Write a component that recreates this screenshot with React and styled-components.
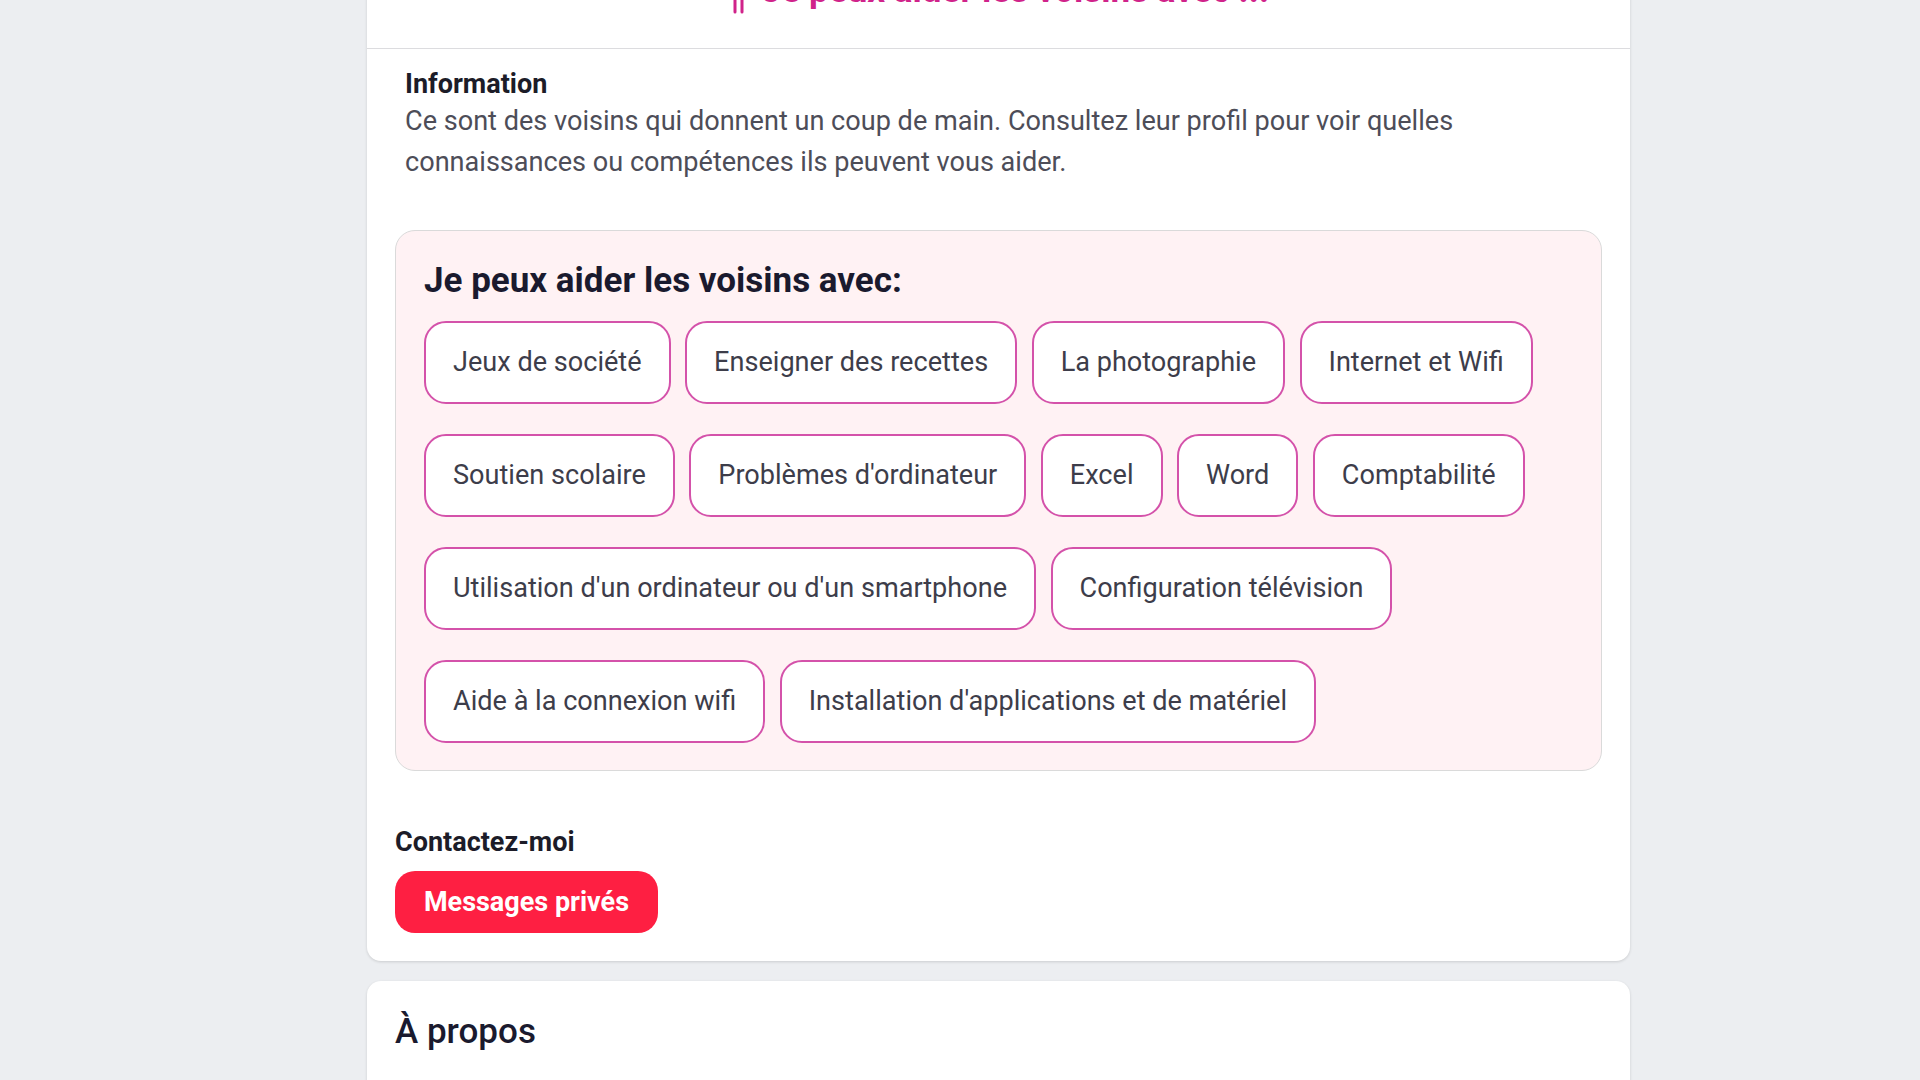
import React from 'react';
import styled, { createGlobalStyle } from 'styled-components';

const GlobalStyle = createGlobalStyle`
  html, body {
    margin: 0;
    padding: 0;
    overflow: hidden;
    background: #eceef1;
    font-family: Roboto, "Noto Sans", "Liberation Sans", sans-serif;
  }
`;

const Page = styled.main`
  width: 1263px;
  margin: -60px 0 0 367px;
  display: flex;
  flex-direction: column;
  gap: 20px;
`;

const Card = styled.section`
  background: #ffffff;
  border-radius: 14px;
  box-shadow: 0 1px 3px rgba(0, 0, 0, 0.14);
  padding: 0 28px ${({ $bottom }) => $bottom || '28px'};
`;

const CardHeader = styled.header`
  margin: 0 -28px;
  padding: 30px 28px 36px;
  border-bottom: 1px solid #dcdcdf;
  display: flex;
  justify-content: center;
  align-items: flex-end;
  gap: 12px;
`;

const TitleIcon = styled.svg`
  flex: none;
  margin-bottom: -4px;
`;

const PinkTitle = styled.h2`
  margin: 0;
  font-size: 35px;
  line-height: 42px;
  font-weight: 700;
  color: #d0238a;
`;

const InfoBlock = styled.div`
  padding: 18px 10px 0;
`;

const InfoTitle = styled.h3`
  margin: 0;
  font-size: 27px;
  line-height: 34px;
  font-weight: 700;
  color: #1c1c28;
`;

const InfoText = styled.p`
  margin: 0;
  font-size: 27.1px;
  line-height: 40.5px;
  color: #4d4d58;
`;

const SkillBox = styled.div`
  margin-top: 48px;
  background: #fff2f4;
  border: 1.5px solid #dadada;
  border-radius: 20px;
  padding: 28px 28px 27px;
`;

const SkillHeading = styled.h3`
  margin: 0 0 19px;
  font-size: 35px;
  line-height: 43px;
  font-weight: 700;
  color: #1a1a2e;
`;

const TagList = styled.div`
  display: flex;
  flex-wrap: wrap;
  gap: 30px 14.5px;
`;

const Tag = styled.span`
  display: inline-flex;
  align-items: center;
  padding: 23px 27px;
  font-size: 27.1px;
  line-height: 33px;
  color: #3d3d4a;
  background: #ffffff;
  border: 2px solid #d452aa;
  border-radius: 22px;
  white-space: nowrap;
`;

const ContactTitle = styled.h3`
  margin: 54px 0 12px;
  font-size: 27px;
  line-height: 34px;
  font-weight: 700;
  color: #1c1c28;
`;

const RedButton = styled.button`
  width: 263px;
  height: 62px;
  border: none;
  border-radius: 20px;
  background: #fe1f42;
  color: #ffffff;
  font-family: inherit;
  font-size: 27px;
  font-weight: 700;
  cursor: pointer;
`;

const AboutTitle = styled.h2`
  margin: 0;
  padding-top: 30px;
  font-size: 35px;
  line-height: 42px;
  font-weight: 500;
  color: #1a1a2e;
`;

const skills = [
  'Jeux de société',
  'Enseigner des recettes',
  'La photographie',
  'Internet et Wifi',
  'Soutien scolaire',
  "Problèmes d'ordinateur",
  'Excel',
  'Word',
  'Comptabilité',
  "Utilisation d'un ordinateur ou d'un smartphone",
  'Configuration télévision',
  'Aide à la connexion wifi',
  "Installation d'applications et de matériel",
];

function HandIcon() {
  return (
    <TitleIcon width="22" height="30" viewBox="0 0 22 30" fill="none" stroke="#d0238a" strokeWidth="3" strokeLinecap="round">
      <path d="M7 4v22M14 4v22" />
    </TitleIcon>
  );
}

export default function App() {
  return (
    <>
      <GlobalStyle />
      <Page>
        <Card>
          <CardHeader>
            <HandIcon />
            <PinkTitle>Je peux aider les voisins avec ...</PinkTitle>
          </CardHeader>
          <InfoBlock>
            <InfoTitle>Information</InfoTitle>
            <InfoText>
              Ce sont des voisins qui donnent un coup de main. Consultez leur profil pour voir quelles
              <br />
              connaissances ou compétences ils peuvent vous aider.
            </InfoText>
          </InfoBlock>
          <SkillBox>
            <SkillHeading>Je peux aider les voisins avec:</SkillHeading>
            <TagList>
              {skills.map((s) => (
                <Tag key={s}>{s}</Tag>
              ))}
            </TagList>
          </SkillBox>
          <ContactTitle>Contactez-moi</ContactTitle>
          <RedButton>Messages privés</RedButton>
        </Card>
        <Card $bottom="200px">
          <AboutTitle>À propos</AboutTitle>
        </Card>
      </Page>
    </>
  );
}
